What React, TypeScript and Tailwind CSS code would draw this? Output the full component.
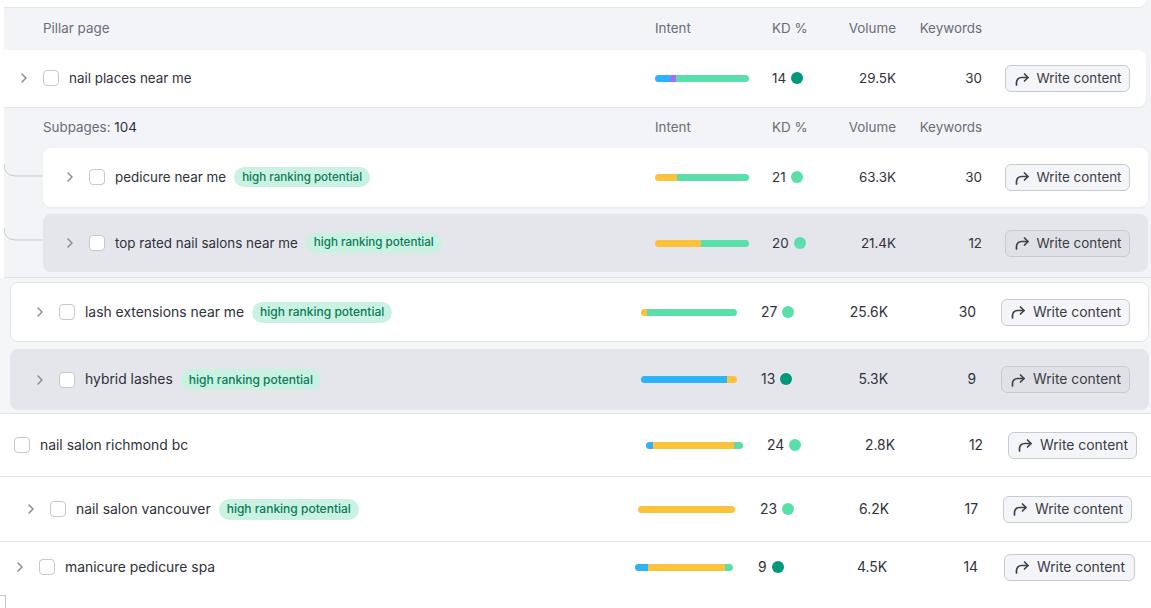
import React from "react";

type Seg = { c: string };
type Row = {
  name: string;
  badge?: boolean;
  chevron?: boolean;
  gray?: boolean;
  big?: boolean;
  bar: Seg[];
  barW: string;
  kd: string;
  darkDot?: boolean;
  vol: string;
  kw: string;
  lead: string;
  intent: string;
  kdCol: string;
  kwCol: string;
  btn: string;
};

const blue = "bg-[#2db3f8]";
const purple = "bg-[#a46ff5]";
const green = "bg-[#5bdfaa]";
const yellow = "bg-[#fcc23c]";

function Chevron() {
  return (
    <svg width="6" height="10" viewBox="0 0 6 10" className="shrink-0">
      <path d="M1 1l4 4-4 4" fill="none" stroke="#8b8d97" strokeWidth="1.5" strokeLinecap="round" strokeLinejoin="round" />
    </svg>
  );
}

function ShareIcon() {
  return (
    <svg width="16" height="16" viewBox="0 0 16 16" className="shrink-0">
      <path d="M2.5 14v-2.5a5 5 0 0 1 5-5h6.5" fill="none" stroke="#40414a" strokeWidth="1.7" strokeLinecap="round" />
      <path d="M10.5 3l3.5 3.5-3.5 3.5" fill="none" stroke="#40414a" strokeWidth="1.7" strokeLinecap="round" strokeLinejoin="round" />
    </svg>
  );
}

function Checkbox() {
  return <div className="w-4 h-4 shrink-0 rounded-[4px] border border-[#c6c8cf] bg-white" />;
}

function Badge({ big }: { big?: boolean }) {
  return (
    <span
      className={`ml-2 shrink-0 rounded-full bg-[#c9f2e2] px-2 flex items-center font-medium text-[#0b7a58] ${
        big ? "h-[21px] text-[12px]" : "h-5 text-[11.6px]"
      }`}
    >
      high ranking potential
    </span>
  );
}

function Cells({ r }: { r: Row }) {
  return (
    <div className={`flex items-center h-full text-[#30313a] ${r.big ? "text-[13.9px]" : "text-[13.4px]"}`}>
      <div className={`${r.lead} flex items-center shrink-0`}>
        {r.chevron && (
          <div className="w-[22px] shrink-0 flex">
            <Chevron />
          </div>
        )}
        <Checkbox />
        <span className="ml-[10px] whitespace-nowrap">{r.name}</span>
        {r.badge && <Badge big={r.big} />}
      </div>
      <div className={`${r.intent} shrink-0`}>
        <div className={`${r.barW} h-[7px] rounded-full overflow-hidden flex`}>
          {r.bar.map((s, i) => (
            <div key={i} className={`${s.c} h-full`} />
          ))}
        </div>
      </div>
      <div className={`${r.kdCol} shrink-0 flex items-center gap-[5px]`}>
        <span>{r.kd}</span>
        <span className={`w-3 h-3 rounded-full ${r.darkDot ? "bg-[#00977a]" : "bg-[#5bdfaa]"}`} />
      </div>
      <div className="w-[60px] shrink-0 text-right">{r.vol}</div>
      <div className={`${r.kwCol} shrink-0 text-right`}>{r.kw}</div>
      <button
        className={`${r.btn} h-[27px] shrink-0 flex items-center justify-center gap-[7px] rounded-md border border-[#c8cad1] text-[#3b3c45] ${
          r.big ? "text-[13.9px]" : "text-[13.4px]"
        } ${r.gray ? "bg-[#dfe1e7]" : "bg-[#f4f5f8]"}`}
      >
        <ShareIcon />
        Write content
      </button>
    </div>
  );
}

const pillar: Row = {
  name: "nail places near me",
  chevron: true,
  bar: [{ c: `${blue} w-[15px]` }, { c: `${purple} w-[6px]` }, { c: `${green} flex-1` }],
  barW: "w-[94px]",
  kd: "14",
  darkDot: true,
  vol: "29.5K",
  kw: "30",
  lead: "w-[651px] pl-[17px]",
  intent: "w-[117px]",
  kdCol: "w-[64px]",
  kwCol: "w-[86px]",
  btn: "ml-[23px] w-[125px]",
};

const subs: Row[] = [
  {
    name: "pedicure near me",
    badge: true,
    chevron: true,
    bar: [{ c: `${yellow} w-[22px]` }, { c: `${green} flex-1` }],
    barW: "w-[94px]",
    kd: "21",
    vol: "63.3K",
    kw: "30",
    lead: "w-[612px] pl-[24px]",
    intent: "w-[117px]",
    kdCol: "w-[64px]",
    kwCol: "w-[86px]",
    btn: "ml-[23px] w-[125px]",
  },
  {
    name: "top rated nail salons near me",
    badge: true,
    chevron: true,
    gray: true,
    bar: [{ c: `${yellow} w-[46px]` }, { c: `${green} flex-1` }],
    barW: "w-[94px]",
    kd: "20",
    vol: "21.4K",
    kw: "12",
    lead: "w-[612px] pl-[24px]",
    intent: "w-[117px]",
    kdCol: "w-[64px]",
    kwCol: "w-[86px]",
    btn: "ml-[23px] w-[125px]",
  },
];

const lash: Row = {
  name: "lash extensions near me",
  badge: true,
  chevron: true,
  big: true,
  bar: [{ c: `${yellow} w-[6px]` }, { c: `${green} flex-1` }],
  barW: "w-[96px]",
  kd: "27",
  vol: "25.6K",
  kw: "30",
  lead: "w-[630px] pl-[26px]",
  intent: "w-[120px]",
  kdCol: "w-[67px]",
  kwCol: "w-[88px]",
  btn: "ml-[25px] w-[129px]",
};

const hybrid: Row = {
  name: "hybrid lashes",
  badge: true,
  chevron: true,
  gray: true,
  big: true,
  bar: [{ c: `${blue} w-[86px]` }, { c: `${yellow} flex-1` }],
  barW: "w-[96px]",
  kd: "13",
  darkDot: true,
  vol: "5.3K",
  kw: "9",
  lead: "w-[630px] pl-[26px]",
  intent: "w-[120px]",
  kdCol: "w-[67px]",
  kwCol: "w-[88px]",
  btn: "ml-[25px] w-[129px]",
};

const richmond: Row = {
  name: "nail salon richmond bc",
  big: true,
  bar: [{ c: `${blue} w-[7px]` }, { c: `${yellow} w-[81px]` }, { c: `${green} flex-1` }],
  barW: "w-[97px]",
  kd: "24",
  vol: "2.8K",
  kw: "12",
  lead: "w-[646px] pl-[14px]",
  intent: "w-[121px]",
  kdCol: "w-[68px]",
  kwCol: "w-[88px]",
  btn: "ml-[25px] w-[129px]",
};

const vancouver: Row = {
  name: "nail salon vancouver",
  badge: true,
  chevron: true,
  big: true,
  bar: [{ c: `${yellow} flex-1` }],
  barW: "w-[97px]",
  kd: "23",
  vol: "6.2K",
  kw: "17",
  lead: "w-[638px] pl-[28px]",
  intent: "w-[122px]",
  kdCol: "w-[69px]",
  kwCol: "w-[89px]",
  btn: "ml-[25px] w-[129px]",
};

const manicure: Row = {
  name: "manicure pedicure spa",
  chevron: true,
  big: true,
  bar: [{ c: `${blue} w-[13px]` }, { c: `${yellow} w-[77px]` }, { c: `${green} flex-1` }],
  barW: "w-[98px]",
  kd: "9",
  darkDot: true,
  vol: "4.5K",
  kw: "14",
  lead: "w-[635px] pl-[17px]",
  intent: "w-[123px]",
  kdCol: "w-[69px]",
  kwCol: "w-[91px]",
  btn: "ml-[26px] w-[131px]",
};

function HeaderRow({ title, count }: { title: string; count?: string }) {
  return (
    <div className="flex items-center h-full text-[13.4px] text-[#6b6d78]">
      <div className="w-[651px] pl-[39px] shrink-0">
        {title}
        {count && <span className="text-[#30313a]">{count}</span>}
      </div>
      <div className="w-[117px] shrink-0">Intent</div>
      <div className="w-[64px] shrink-0">KD %</div>
      <div className="w-[60px] shrink-0 text-right">Volume</div>
      <div className="w-[86px] shrink-0 text-right">Keywords</div>
    </div>
  );
}

export default function App() {
  return (
    <div className="w-[1151px] h-[608px] overflow-hidden bg-white font-['Inter','Liberation_Sans',sans-serif]">
      {/* pillar block */}
      <div className="pl-[4px] bg-white">
        <div className="relative bg-[#f3f4f7] border-b border-[#dfe1e6] pb-[5px]">
          <svg className="absolute left-[-4px] top-0" width="50" height="278" viewBox="0 0 50 278">
            <path d="M4 164 Q4 176 16 176 H47" fill="none" stroke="#c9cbd2" strokeWidth="1" />
            <path d="M4 228 Q4 240 16 240 H47" fill="none" stroke="#c9cbd2" strokeWidth="1" />
          </svg>
          <div className="h-[7px] mr-[5px] bg-white rounded-br-lg shadow-[0_1px_1px_rgba(0,0,0,0.06)]" />
          <div className="h-[43px]">
            <HeaderRow title="Pillar page" />
          </div>
          <div className="h-[57px] mr-[5px] bg-white rounded-r-lg shadow-[0_1px_2px_rgba(0,0,0,0.07)]">
            <Cells r={pillar} />
          </div>
          <div className="h-[41px]">
            <HeaderRow title="Subpages: " count="104" />
          </div>
          <div className="relative ml-[39px] mr-[3px] h-[59px] bg-white rounded-lg shadow-[0_1px_2px_rgba(0,0,0,0.05)]">
            <Cells r={subs[0]} />
          </div>
          <div className="relative ml-[39px] mr-[3px] mt-[7px] h-[58px] bg-[#e4e6eb] rounded-lg">
            <Cells r={subs[1]} />
          </div>
        </div>
      </div>

      {/* expanded rows */}
      <div className="bg-[#f5f6f8] pt-[4px] pb-[3px] border-b border-[#dfe1e6]">
        <div className="ml-[10px] mr-[2px] h-[60px] bg-white border border-[#e1e3e8] rounded-lg">
          <Cells r={lash} />
        </div>
        <div className="ml-[10px] mr-[2px] mt-[7px] h-[61px] bg-[#e4e6eb] rounded-lg pl-px">
          <Cells r={hybrid} />
        </div>
      </div>

      <div className="h-[63px] border-b border-[#e1e3e8]">
        <Cells r={richmond} />
      </div>
      <div className="h-[65px] border-b border-[#e1e3e8]">
        <Cells r={vancouver} />
      </div>
      <div className="h-[50px]">
        <Cells r={manicure} />
      </div>
      <div className="mt-[3px] w-[6px] h-[14px] border-t border-r border-[#c5c7cd]" />
    </div>
  );
}
